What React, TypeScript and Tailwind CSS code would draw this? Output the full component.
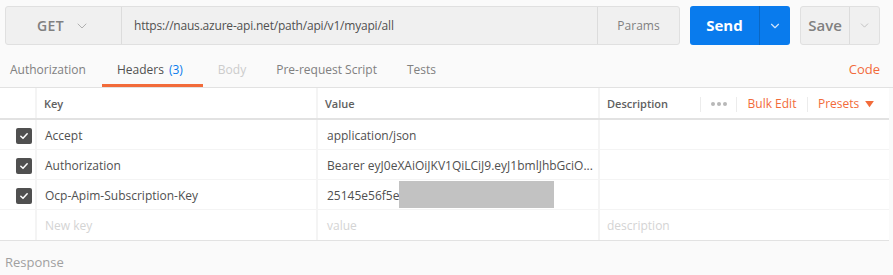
import { ChevronDown } from "lucide-react";

const font = { fontFamily: '"Open Sans", "Liberation Sans", sans-serif' };

const rows = [
  { key: "Accept", value: "application/json", masked: false },
  {
    key: "Authorization",
    value: "Bearer eyJ0eXAiOiJKV1QiLCiJ9.eyJ1bmlJhbGciO...",
    masked: false,
  },
  { key: "Ocp-Apim-Subscription-Key", value: "25145e56f5e", masked: true },
];

function Checkbox() {
  return (
    <div className="w-4 h-4 rounded-[2px] bg-[#505050] flex items-center justify-center">
      <svg viewBox="0 0 12 12" className="w-[10px] h-[10px]" fill="none">
        <path
          d="M2.2 6.3 L4.8 8.8 L9.8 3.4"
          stroke="white"
          strokeWidth="1.8"
          strokeLinecap="round"
          strokeLinejoin="round"
        />
      </svg>
    </div>
  );
}

export default function App() {
  return (
    <div
      className="w-[893px] h-[275px] bg-[#fafafa] text-[#505050] overflow-hidden"
      style={font}
    >
      {/* Request bar */}
      <div className="flex items-start pt-[6px] pl-[5px] h-[53px]">
        <div className="flex h-[39px] w-[675px] rounded-[3px] border border-[#e0e0e0] bg-[#f0f0f0]">
          <div className="w-[116px] flex items-center justify-center gap-[10px] border-r border-[#dcdcdc]">
            <span className="text-[14px] font-semibold text-[#808080] tracking-wide">
              GET
            </span>
            <ChevronDown className="w-[16px] h-[16px] text-[#b0b0b0]" strokeWidth={1.5} />
          </div>
          <div className="flex-1 flex items-center pl-[12px] text-[12px] tracking-[-0.2px] text-[#505050]">
            https://naus.azure-api.net/path/api/v1/myapi/all
          </div>
          <div className="w-[82px] flex items-center justify-center border-l border-[#dcdcdc] text-[12px] text-[#808080]">
            Params
          </div>
        </div>
        <div className="ml-[10px] flex h-[39px] w-[100px] rounded-[3px] bg-[#097bed] text-white">
          <div className="w-[69px] flex items-center justify-center text-[15px] font-bold">
            Send
          </div>
          <div className="flex-1 flex items-center justify-center border-l border-[#0a67c4]">
            <ChevronDown className="w-[14px] h-[14px] text-[#cfe3fb]" strokeWidth={2} />
          </div>
        </div>
        <div className="ml-[10px] flex h-[39px] w-[80px] rounded-[3px] border border-[#e0e0e0] bg-[#f0f0f0]">
          <div className="w-[48px] flex items-center justify-center text-[15px] font-semibold text-[#808080]">
            Save
          </div>
          <div className="flex-1 flex items-center justify-center border-l border-[#dcdcdc]">
            <ChevronDown className="w-[13px] h-[13px] text-[#b8b8b8]" strokeWidth={1.5} />
          </div>
        </div>
      </div>

      {/* Tabs */}
      <div className="flex items-stretch h-[35px] border-b border-[#e2e2e2] pr-[13px] text-[12px]">
        <div className="flex items-center px-[10px] text-[#808080]">Authorization</div>
        <div className="flex items-center ml-[6px] pl-[15px] pr-[20px] text-[#505050] border-b-[3px] border-[#f26b3a] pt-[3px]">
          Headers<span className="ml-[5px] text-[#097bed]">(3)</span>
        </div>
        <div className="flex items-center px-[15px] text-[#cccccc]">Body</div>
        <div className="flex items-center px-[15px] text-[#808080]">Pre-request Script</div>
        <div className="flex items-center px-[15px] text-[#808080]">Tests</div>
        <div className="flex-1" />
        <div className="flex items-center text-[13px] text-[#f26b3a]">Code</div>
      </div>

      {/* Headers table */}
      <div className="w-[889px] grid grid-cols-[35px_279px_280px_1fr] gap-x-[2px] bg-[#f4f4f4]">
        <div className="bg-white h-[30px]" />
        <div className="bg-white h-[30px] flex items-center pl-[7px] pt-[2px] text-[11px] font-semibold text-[#606060]">
          Key
        </div>
        <div className="bg-white h-[30px] flex items-center pl-[7px] pt-[2px] text-[11px] font-semibold text-[#606060]">
          Value
        </div>
        <div className="bg-white h-[30px] flex items-center pt-[2px] text-[11px]">
          <div className="w-[100px] pl-[7px] font-semibold text-[#606060]">Description</div>
          <div className="w-[37px] h-[15px] flex items-center justify-center gap-[2px] border-l border-r border-[#ececec]">
            <span className="w-[4px] h-[4px] rounded-full bg-[#b8b8b8]" />
            <span className="w-[4px] h-[4px] rounded-full bg-[#b8b8b8]" />
            <span className="w-[4px] h-[4px] rounded-full bg-[#b8b8b8]" />
          </div>
          <div className="w-[71px] h-[15px] flex items-center justify-center border-r border-[#ececec] text-[12px] text-[#f26b3a]">
            Bulk Edit
          </div>
          <div className="flex-1 flex items-center pl-[10px] gap-[6px] text-[12px] text-[#f26b3a]">
            Presets
            <svg viewBox="0 0 10 8" className="w-[9px] h-[7px]">
              <path d="M0 0 H10 L5 7 Z" fill="#f26b3a" />
            </svg>
          </div>
        </div>

        <div className="col-span-4 h-[2px] bg-[#e2e2e2]" />

        {rows.map((r) => (
          <div key={r.key} className="contents">
            <div className="bg-white h-[29px] mb-[1px] flex items-center justify-end pr-[3px] pt-[2px]">
              <Checkbox />
            </div>
            <div className="bg-white h-[29px] mb-[1px] flex items-center pl-[8px] pt-[2px] text-[12px]">
              {r.key}
            </div>
            <div className="bg-white h-[29px] mb-[1px] flex items-stretch pl-[9px] text-[12px] whitespace-nowrap">
              <span className="flex items-center pt-[2px]">{r.value}</span>
              {r.masked && <span className="w-[155px] bg-[#c2c2c2] mr-auto my-[1px]" />}
            </div>
            <div className="bg-white h-[29px] mb-[1px]" />
          </div>
        ))}

        <div className="bg-white h-[30px]" />
        <div className="bg-white h-[30px] flex items-center pl-[8px] pt-[2px] text-[12px] text-[#d4d4d4]">
          New key
        </div>
        <div className="bg-white h-[30px] flex items-center pl-[9px] pt-[2px] text-[12px] text-[#d4d4d4]">
          value
        </div>
        <div className="bg-white h-[30px] flex items-center pl-[7px] pt-[2px] text-[12px] text-[#d4d4d4]">
          description
        </div>
      </div>
      <div className="w-[889px] h-[1px] bg-[#e2e2e2]" />

      <div className="pl-[5px] pt-[12px] text-[13px] text-[#a0a0a0]">Response</div>
    </div>
  );
}
